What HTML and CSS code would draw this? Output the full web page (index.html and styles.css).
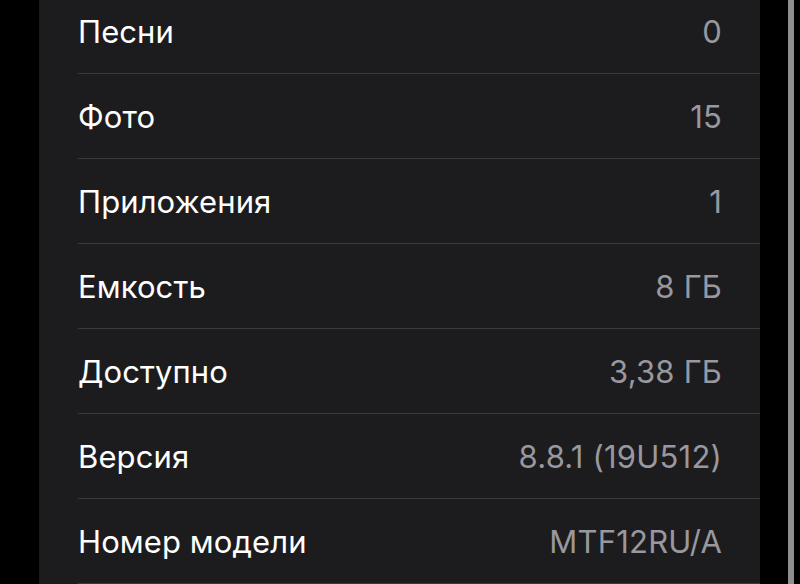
FILE: index.html
```html
<!DOCTYPE html>
<html lang="ru">
<head>
    <meta charset="UTF-8">
    <meta name="viewport" content="width=device-width, initial-scale=1.0">
    <title>Об этом устройстве</title>
    <link rel="stylesheet" href="styles.css">
</head>
<body>
    <div class="screen">
        <div class="info-card">
            <div class="row"><span class="label">Песни</span><span class="value">0</span></div>
            <div class="row"><span class="label">Фото</span><span class="value">15</span></div>
            <div class="row"><span class="label">Приложения</span><span class="value">1</span></div>
            <div class="row"><span class="label">Емкость</span><span class="value">8 ГБ</span></div>
            <div class="row"><span class="label">Доступно</span><span class="value">3,38 ГБ</span></div>
            <div class="row"><span class="label">Версия</span><span class="value">8.8.1 (19U512)</span></div>
            <div class="row"><span class="label">Номер модели</span><span class="value">MTF12RU/A</span></div>
        </div>
        <div class="scroll-bar"></div>
    </div>
</body>
</html>
```

FILE: styles.css
```css
body {
    margin: 0;
    background: #000;
    font-family: 'Inter', 'Roboto', sans-serif;
    overflow: hidden;
}
.screen {
    display: flex;
    align-items: flex-start;
    height: 584px;
}
.info-card {
    background: #1c1c1e;
    width: 721px;
    margin: -11px 0 0 39px;
    padding-bottom: 20px;
    border-radius: 14px;
}
.row {
    display: flex;
    justify-content: space-between;
    align-items: center;
    height: 84px;
    margin-left: 39px;
    padding-right: 38px;
    border-bottom: 1px solid #3a3a3c;
}
.label {
    color: #fff;
    font-size: 31px;
    letter-spacing: 0.1px;
}
.value {
    color: #98989e;
    font-size: 31px;
    letter-spacing: 0.2px;
}
.scroll-bar {
    width: 6px;
    height: 584px;
    margin-left: 28px;
    background: #8e8e8e;
}
```
